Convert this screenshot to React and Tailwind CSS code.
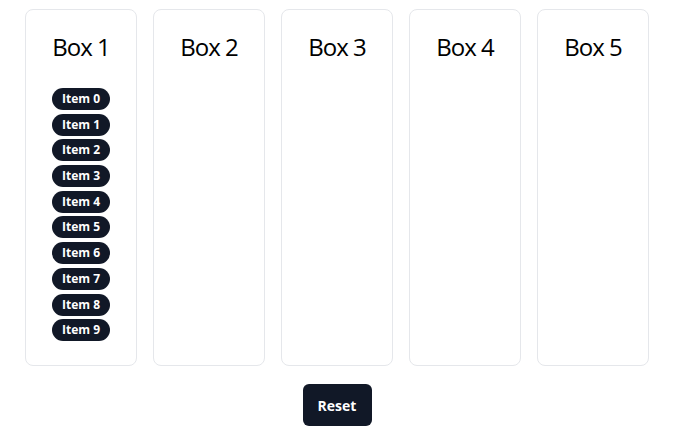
import React, { useState } from 'react';

const initialBoxes = [
  Array.from({ length: 10 }, (_, i) => `Item ${i}`),
  [],
  [],
  [],
  [],
];

const App = () => {
  const [boxes, setBoxes] = useState(initialBoxes);

  return (
    <div className="min-h-screen bg-white pl-[25px] pt-[9px] font-['Open_Sans',sans-serif]">
      <div className="flex w-[624px] flex-col items-center">
        <div className="flex gap-4">
          {boxes.map((items, i) => (
            <div
              key={i}
              className="flex h-[357px] w-[112px] flex-col items-center rounded-lg border border-[#e5e7eb] bg-white pt-[21px]"
            >
              <h2 className="text-[24px] leading-8 tracking-[-0.04em] text-black">Box {i + 1}</h2>
              {items.length > 0 && (
                <div className="mt-[25px] flex flex-col items-start gap-[3.7px]">
                  {items.map((item) => (
                    <span
                      key={item}
                      className="rounded-full bg-[#111827] px-[10px] py-[3px] text-[12px] font-bold leading-4 text-white"
                    >
                      {item}
                    </span>
                  ))}
                </div>
              )}
            </div>
          ))}
        </div>
        <button
          onClick={() => setBoxes(initialBoxes)}
          className="mt-[18px] h-[42px] w-[69px] rounded-md bg-[#111827] text-[14px] font-bold text-white"
        >
          Reset
        </button>
      </div>
    </div>
  );
};

export default App;
